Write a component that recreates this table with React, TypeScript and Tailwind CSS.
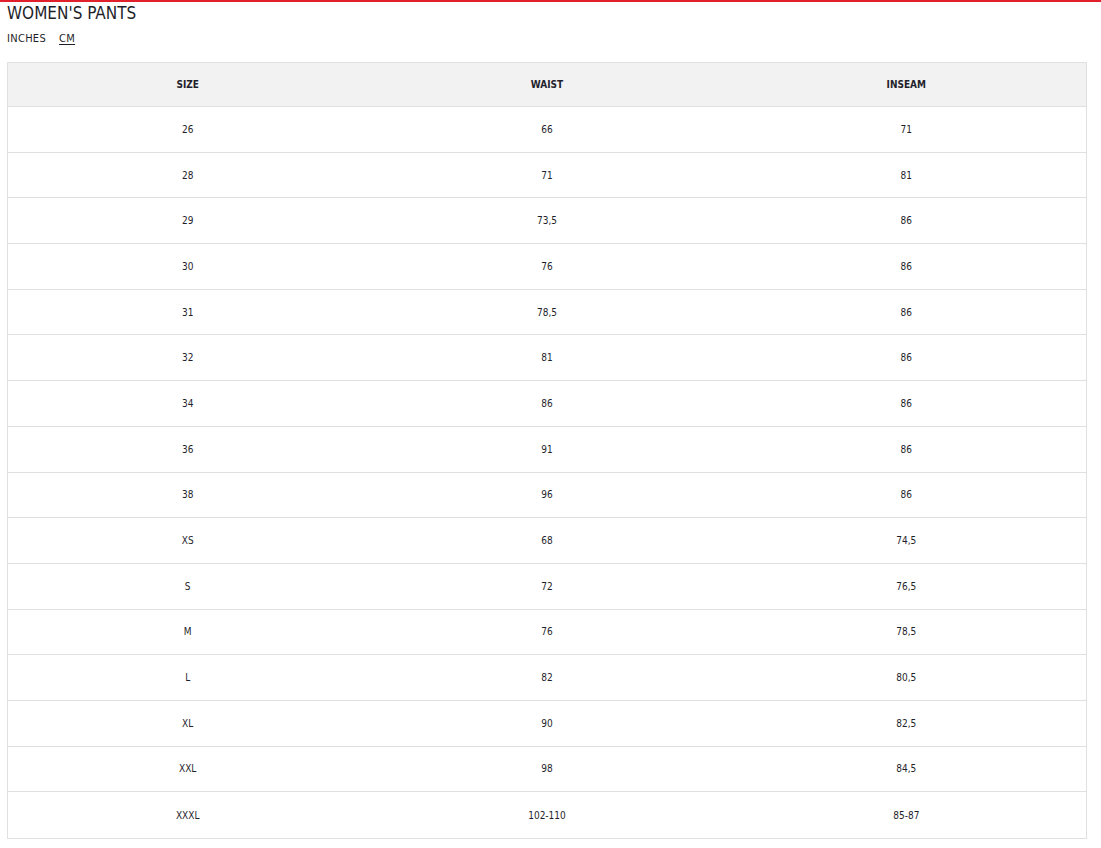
import React from "react";

const rows: [string, string, string][] = [
  ["26", "66", "71"],
  ["28", "71", "81"],
  ["29", "73,5", "86"],
  ["30", "76", "86"],
  ["31", "78,5", "86"],
  ["32", "81", "86"],
  ["34", "86", "86"],
  ["36", "91", "86"],
  ["38", "96", "86"],
  ["XS", "68", "74,5"],
  ["S", "72", "76,5"],
  ["M", "76", "78,5"],
  ["L", "82", "80,5"],
  ["XL", "90", "82,5"],
  ["XXL", "98", "84,5"],
  ["XXXL", "102-110", "85-87"],
];

export default function App() {
  return (
    <div
      className="w-[1101px] h-[848px] bg-white text-[#1f1f2b] overflow-hidden"
      style={{ fontFamily: '"DejaVu Sans Condensed", "DejaVu Sans", sans-serif' }}
    >
      <div className="h-[2px] bg-[#e0202a]" />
      <div className="pl-[7px]">
        <div className="text-[17px] leading-[20px] font-light mt-[1px] h-[21px]">
          WOMEN'S PANTS
        </div>
        <div className="flex gap-[13px] text-[11px] leading-[13px] tracking-[0.3px] mt-[8px] h-[13px]">
          <span>INCHES</span>
          <span className="underline underline-offset-2">CM</span>
        </div>
        <div className="mt-[17px] w-[1080px] border border-[#e0e0e0]">
          <div className="grid grid-cols-3 h-[44px] bg-[#f2f2f2] border-b border-[#e0e0e0] items-center text-center text-[10px] font-bold">
            <div>SIZE</div>
            <div>WAIST</div>
            <div>INSEAM</div>
          </div>
          {rows.map((r, i) => (
            <div
              key={i}
              className={
                "grid grid-cols-3 h-[45.7px] items-center text-center text-[10px] " +
                (i < rows.length - 1 ? "border-b border-[#e0e0e0]" : "")
              }
            >
              <div>{r[0]}</div>
              <div>{r[1]}</div>
              <div>{r[2]}</div>
            </div>
          ))}
        </div>
      </div>
    </div>
  );
}
